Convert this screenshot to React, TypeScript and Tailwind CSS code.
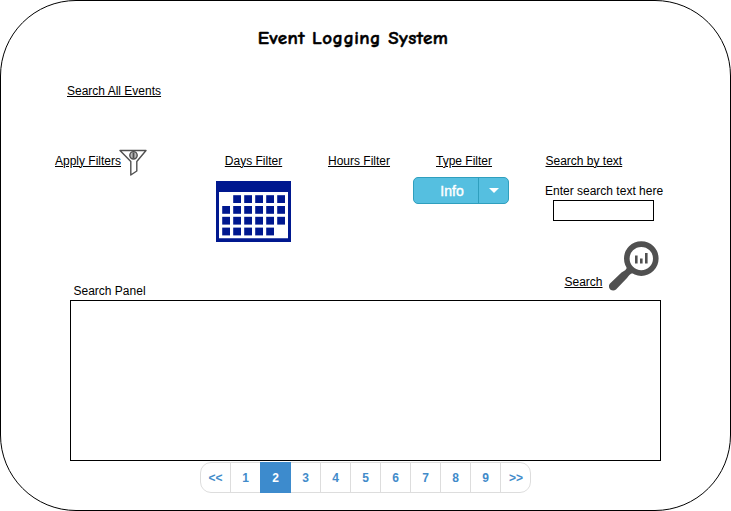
import React from 'react';

const days = Array.from({ length: 24 }, (_, i) => i).filter((i) => i !== 0 && i !== 23);
const pages = ['<<', '1', '2', '3', '4', '5', '6', '7', '8', '9', '>>'];

function Label({ children, className = '' }: { children: React.ReactNode; className?: string }) {
  return <div className={`whitespace-nowrap leading-4 underline underline-offset-1 decoration-1 ${className}`}>{children}</div>;
}

function Funnel() {
  return (
    <svg className="-mt-1 -ml-[2px] shrink-0" width="28" height="28" viewBox="0 0 28 28" fill="none" stroke="#505050" strokeWidth="1.4">
      <path d="M1 1.5H27L17.8 12.5V22L11.8 26V12.5Z" strokeLinejoin="round" />
      <circle cx="14.5" cy="6.3" r="3.7" fill="#bbb" />
      <path d="M14.5 3.5V9.2" strokeWidth="1.8" />
    </svg>
  );
}

function Calendar() {
  return (
    <svg width="75" height="61" viewBox="0 0 75 61">
      <path d="M0 0H75V61H0Z" fill="#00188f" />
      <path d="M3 11H72V57.2H3Z" fill="#fff" />
      {days.map((i) => (
        <rect key={i} x={6.2 + (i % 6) * 11} y={14.2 + Math.floor(i / 6) * 10.8} width="7.8" height="7.8" fill="#00188f" />
      ))}
    </svg>
  );
}

function Magnifier() {
  return (
    <svg width="50" height="50" viewBox="0 0 50 50" fill="none" stroke="#505050">
      <circle cx="32.3" cy="17.6" r="14.5" strokeWidth="5.6" />
      <path d="M18 26L24 32C21 32.5 19.5 35 18 37L7 48.5C3 52-2.5 46.5 1 42.5L12.5 31.5C15.5 29.5 17.5 29 18 26Z" fill="#505050" stroke="none" />
      <path d="M27.3 14.5V22.5M32.3 17.5V22.5M37.3 12V22.5" strokeWidth="2.6" />
    </svg>
  );
}

export default function App() {
  return (
    <div className="flex h-[511px] w-[731px] flex-col overflow-hidden rounded-[76px] border border-black bg-white font-['Liberation_Sans',Arial,sans-serif] text-xs text-black">
      <h1 className="mt-[25px] pr-[25px] text-center font-['Comic_Sans_MS','Comic_Neue',Lato,sans-serif] text-[19px] leading-6 font-bold tracking-[0.45px] [-webkit-text-stroke:0.5px_black]">Event Logging System</h1>
      <Label className="mt-[33px] ml-[66px] self-start">Search All Events</Label>

      <div className="mt-[54px] flex h-[89px] items-start">
        <div className="ml-[54px] flex w-[161px]">
          <Label>Apply Filters</Label>
          <Funnel />
        </div>
        <div className="flex w-[75px] flex-col items-center gap-3">
          <Label>Days Filter</Label>
          <Calendar />
        </div>
        <Label className="ml-[37px] w-[63px]">Hours Filter</Label>
        <div className="ml-[22px] flex w-[96px] flex-col">
          <Label className="ml-[23px]">Type Filter</Label>
          <div className="mt-2 flex h-[27px] rounded-[5px] border border-[#2f9fbe] bg-[#55bfe0] text-white">
            <div className="flex w-[65px] items-center justify-center border-r border-[#2f9fbe] pl-3 text-sm [-webkit-text-stroke:0.4px_white]">Info</div>
            <div className="flex flex-1 items-center justify-center">
              <svg width="10" height="5" viewBox="0 0 10 5"><path d="M0 0H10L5 5Z" fill="white" /></svg>
            </div>
          </div>
        </div>
        <div className="ml-9 flex w-[120px] flex-col items-start">
          <Label className="ml-[0.5px]">Search by text</Label>
          <div className="mt-[14px] leading-4 whitespace-nowrap">Enter search text here</div>
          <input aria-label="Search text" className="mt-[1px] ml-2 h-[21px] w-[101px] border border-black" />
        </div>
      </div>

      <div className="mt-[-1px] flex h-[50px] justify-end pr-[71px]">
        <Label className="mt-[33px] mr-[6.5px]">Search</Label>
        <Magnifier />
      </div>
      <div className="-mt-2 ml-[72.5px] leading-4">Search Panel</div>
      <div className="mt-[1px] ml-[69px] h-[161px] w-[591px] shrink-0 border border-black" />
      <nav className="mt-[1px] ml-[199px] flex h-[31px] w-[331px] shrink-0 rounded-[11px] border border-[#dddddd]">
        {pages.map((page) => (
          <button key={page} className={page === '2' ? '-my-px -ml-px w-[31px] shrink-0 bg-[#3d8bcd] font-bold text-white' : 'w-[30px] shrink-0 border-r border-[#dddddd] font-bold text-[#428bca] last:border-r-0'}>{page}</button>
        ))}
      </nav>
    </div>
  );
}
